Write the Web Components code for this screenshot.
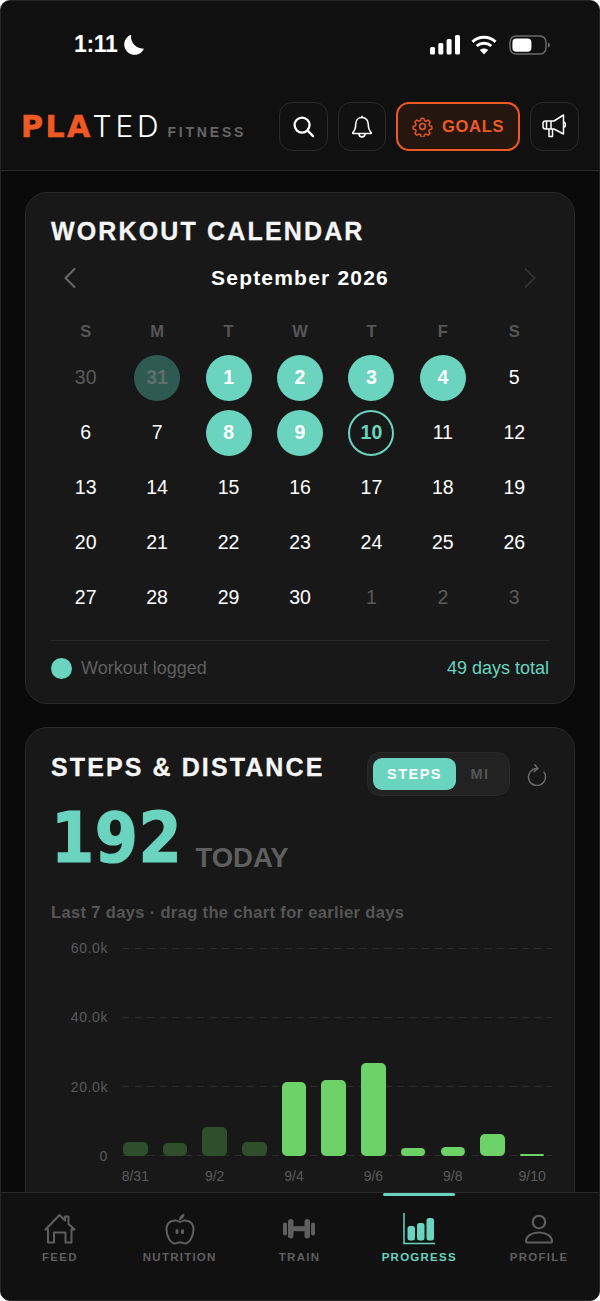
<!DOCTYPE html>
<html lang="en"><head><meta charset="utf-8"><title>Plated Fitness</title>
<style>
html,body{margin:0;padding:0;background:#fff;}
body{font-family:"Liberation Sans",Arial,sans-serif;color:#fff;}
</style></head>
<body>
<plated-app>
  <status-bar slot="top"></status-bar>
  <app-header slot="top"></app-header>
  <workout-calendar></workout-calendar>
  <steps-card></steps-card>
  <bottom-nav slot="bottom"></bottom-nav>
</plated-app>
<script>
const TEAL='#6ad4bf', ORANGE='#ef5a24', GREY='#5f5f5f';
function def(name, html){
  customElements.define(name, class extends HTMLElement{
    constructor(){super();this.attachShadow({mode:'open'}).innerHTML=typeof html==='function'?html(this):html;}
    connectedCallback(){ if(typeof html==='function') this.shadowRoot.innerHTML=html(this); }
  });
}
def('plated-app',`<style>
:host{display:flex;flex-direction:column;width:600px;height:1301px;box-sizing:border-box;background:#0a0a0a;border-radius:10px;border:1px solid #262626;overflow:hidden;font-family:"Liberation Sans",Arial,sans-serif;}
main{flex:1;min-height:0;overflow:hidden;display:flex;flex-direction:column;gap:23px;padding:21px 24px 0;}
</style><slot name="top"></slot><main><slot></slot></main><slot name="bottom"></slot>`);

def('status-bar',`<style>
:host{display:flex;align-items:center;height:87px;box-sizing:border-box;padding:0 49px 0 73px;background:#101010;}
.time{font-size:23px;font-weight:700;letter-spacing:-.35px;margin-right:6px;}
.sp{flex:1}
svg{display:block}
.row{display:flex;align-items:center}
</style>
<span class="time">1:11</span>
<svg width="22" height="22" viewBox="0 0 22 22"><path d="M8.200 .8A10.300 10.300 0 1 0 21 14.600 12 12 0 0 1 8.200 .8Z" fill="#fff"/></svg>
<span class="sp"></span>
<div class="row" style="gap:11px">
<svg width="30" height="20" viewBox="0 0 30 20"><g fill="#fff"><rect x="0" y="12" width="5" height="7.500" rx="1.500"/><rect x="8.300" y="8" width="5" height="11.500" rx="1.500"/><rect x="16.600" y="4" width="5" height="15.500" rx="1.500"/><rect x="25" y="0" width="5" height="19.500" rx="1.500"/></g></svg>
<svg width="26" height="20" viewBox="0 0 26 20" fill="none" stroke="#fff" stroke-width="3"><path d="M1.500 6.800C8 .7 18 .7 24.500 6.800"/><path d="M5.700 11C10 7.200 16 7.200 20.300 11"/><path d="M13 19.500 8.800 15c2.500-2 5.900-2 8.400 0Z" fill="#fff" stroke="none"/></svg>
<svg width="41" height="20" viewBox="0 0 41 20" style="margin-left:1px"><rect x="1" y="1" width="36" height="18" rx="6" fill="none" stroke="#6b6b6b" stroke-width="1.500"/><rect x="3.400" y="3.400" width="19" height="13.400" rx="4" fill="#fff"/><path d="M39 7.500c1.300.5 2 1.400 2 2.500s-.7 2-2 2.500Z" fill="#6b6b6b"/></svg>
</div>`);

const searchI=`<svg width="23" height="23" viewBox="0 0 24 24" fill="none" stroke="#fff" stroke-width="2.400" stroke-linecap="round"><circle cx="10.500" cy="10.500" r="7.800"/><path d="M16.300 16.300 22 22"/></svg>`;
const bellI=`<svg width="22" height="25" viewBox="0 0 24 26" fill="none" stroke="#fff" stroke-width="1.700" stroke-linejoin="round"><path d="M12 3.200c-4.400 0-6.800 3.400-6.800 7.200 0 4.600-1 7-3.200 9.200v1h20v-1c-2.200-2.200-3.200-4.600-3.200-9.200 0-3.800-2.400-7.200-6.800-7.200Z"/><path d="M12 3.200V1.200"/><path d="M8.700 20.800c0 2 1.400 3.500 3.300 3.500s3.300-1.500 3.300-3.500"/></svg>`;
const gearI=`<svg width="21" height="21" viewBox="0 0 24 24" fill="none" stroke="${ORANGE}" stroke-width="1.700" stroke-linejoin="round"><circle cx="12" cy="12" r="3.300"/><path d="M10.200 1.600h3.600l.6 3 2.200.9 2.500-1.700 2.600 2.600-1.700 2.500.9 2.200 3 .6v3.600l-3 .6-.9 2.200 1.700 2.500-2.600 2.600-2.500-1.700-2.200.9-.6 3h-3.600l-.6-3-2.200-.9-2.500 1.700-2.600-2.600 1.700-2.500-.9-2.200-3-.6v-3.600l3-.6.9-2.200-1.700-2.500 2.600-2.600 2.500 1.700 2.200-.9Z" transform="translate(1.200 1.200) scale(.9)"/></svg>`;
const megaI=`<svg width="24" height="24" viewBox="0 0 24 24" fill="none" stroke="#fff" stroke-width="1.500" stroke-linejoin="round"><path d="M21.500 1 12 7H3.500C2 7 1 8 1 9.500v3C1 14 2 15 3.500 15H12l9.500 5Z"/><path d="M21.500 8c1.300.4 2 1.400 2 2.700s-.7 2.300-2 2.700"/><path d="M9 7v8M4.500 7v8"/><path d="M7 15v7.500h3.500V15"/></svg>`;

def('icon-button',`<style>
:host{display:flex;align-items:center;justify-content:center;box-sizing:border-box;width:48.500px;height:49px;border:1.500px solid #2a2a2a;border-radius:13px;background:#111;}
</style><slot></slot>`);

def('app-header',`<style>
:host{display:flex;align-items:center;height:83px;box-sizing:border-box;padding:0 20.500px 6px 20px;background:#101010;border-bottom:1.500px solid #2c2c2c;}
.logo{display:flex;align-items:baseline;flex:1;white-space:nowrap}
.pla{font-family:"DejaVu Sans","Liberation Sans",sans-serif;font-size:30px;font-weight:700;color:${ORANGE};letter-spacing:2.400px;-webkit-text-stroke:.6px ${ORANGE};}
.ted{font-family:Inter,"Liberation Sans",sans-serif;font-size:30px;font-weight:300;color:#fff;letter-spacing:3.800px}
.fit{font-size:14px;font-weight:700;color:#666;letter-spacing:2.800px;margin-left:5px}
.btns{display:flex;gap:9.700px;align-items:center}
.goals{display:flex;align-items:center;justify-content:center;gap:9px;box-sizing:border-box;width:124.500px;height:49px;border:2px solid ${ORANGE};border-radius:13px;background:#251710;color:${ORANGE};font-size:16.500px;font-weight:700;letter-spacing:.7px}
svg{display:block}
</style>
<div class="logo"><span class="pla">PLA</span><span class="ted">TED</span><span class="fit">FITNESS</span></div>
<div class="btns">
<icon-button>${searchI}</icon-button>
<icon-button>${bellI}</icon-button>
<div class="goals">${gearI}<span>GOALS</span></div>
<icon-button>${megaI}</icon-button>
</div>`);

def('day-cell',h=>{
  const k=h.getAttribute('kind')||'';
  return `<style>
:host{display:flex;align-items:center;justify-content:center;height:55px;}
.c{display:flex;align-items:center;justify-content:center;box-sizing:border-box;width:46px;height:46px;border-radius:50%;font-size:19.500px;color:#fff;}
.muted{color:#5a5a5a}
.logged{background:${TEAL};font-weight:700}
.past{background:#2f5a52;color:#5f6f6b;font-weight:700}
.today{border:2px solid ${TEAL};color:${TEAL};font-weight:700}
</style><div class="c ${k}"><slot></slot></div>`;
});

def('workout-calendar',`<style>
:host{display:block;flex:none;box-sizing:border-box;height:511.500px;padding:23px 25px 0;background:#181818;border:1.500px solid #2a2a2a;border-radius:22px;}
h2{margin:0;font-size:25px;line-height:30px;font-weight:700;letter-spacing:2.150px;color:#f5f5f5;-webkit-text-stroke:.3px #f5f5f5}
.month{display:flex;align-items:center;justify-content:space-between;height:36px;margin-top:14px;padding:0 12px}
.month b{font-size:21px;letter-spacing:1.200px;color:#fff}
.wk,.days{display:grid;grid-template-columns:repeat(7,1fr);text-align:center;margin-left:-1px;margin-right:-1px}
.wk{margin-top:25px;font-size:16.500px;line-height:20px;font-weight:700;color:#565656}
.days{margin-top:9px}
.foot{display:flex;align-items:center;margin-top:15px;padding-top:14px;border-top:1.500px solid #2a2a2a;height:27px;font-size:18px;color:#5f5f5f}
.dot{width:21px;height:21px;border-radius:50%;background:${TEAL};margin-right:9px}
.sp{flex:1}
.tot{color:${TEAL}}
svg{display:block}
</style>
<h2>WORKOUT CALENDAR</h2>
<div class="month">
<svg width="14" height="22" viewBox="0 0 14 22" fill="none" stroke="#6a6a6a" stroke-width="2" stroke-linecap="round" stroke-linejoin="round"><path d="M11.500 2 2.500 11l9 9"/></svg>
<b>September 2026</b>
<svg width="14" height="22" viewBox="0 0 14 22" fill="none" stroke="#303030" stroke-width="2" stroke-linecap="round" stroke-linejoin="round"><path d="M2.500 2l9 9-9 9"/></svg>
</div>
<div class="wk"><span>S</span><span>M</span><span>T</span><span>W</span><span>T</span><span>F</span><span>S</span></div>
<div class="days">${(()=>{
  const kinds={1:'logged',2:'logged',3:'logged',4:'logged',8:'logged',9:'logged',10:'today'};
  let o=`<day-cell kind="muted">30</day-cell><day-cell kind="past">31</day-cell>`;
  for(let d=1;d<=30;d++)o+=`<day-cell kind="${kinds[d]||''}">${d}</day-cell>`;
  for(let d=1;d<=3;d++)o+=`<day-cell kind="muted">${d}</day-cell>`;
  return o;
})()}</div>
<div class="foot"><span class="dot"></span><span>Workout logged</span><span class="sp"></span><span class="tot">49 days total</span></div>`);

def('steps-card',`<style>
:host{display:block;flex:none;box-sizing:border-box;height:520px;padding:24px 25px 0;background:#181818;border:1.500px solid #2a2a2a;border-radius:22px 22px 0 0;}
.top{display:flex;align-items:flex-start}
h2{margin:0;font-size:25px;line-height:30px;font-weight:700;letter-spacing:2.100px;color:#f5f5f5;white-space:nowrap;flex:1;-webkit-text-stroke:.3px #f5f5f5}
.tog{display:flex;align-items:center;box-sizing:border-box;width:143px;height:44px;padding:0 5px;border:1.500px solid #2a2a2a;border-radius:13px;background:#222;font-size:14.500px;font-weight:700;letter-spacing:1.500px}
.on{display:flex;align-items:center;justify-content:center;width:83px;height:32px;border-radius:9px;background:${TEAL};color:#fff}
.off{flex:1;text-align:center;color:#555}
.ref{margin:12px 2px 0 17px;display:block}
.big{display:flex;align-items:flex-start;margin-top:0;height:96px}
.num{font-family:"DejaVu Sans Condensed","DejaVu Sans",sans-serif;font-stretch:condensed;font-size:69px;font-weight:700;line-height:84px;letter-spacing:.6px;color:${TEAL};-webkit-text-stroke:1.200px ${TEAL}}
.today{font-size:27.500px;font-weight:700;color:#5f5f5f;line-height:32px;margin:46px 0 0 13px;letter-spacing:0}
.sub{font-size:16.500px;line-height:20px;font-weight:700;color:#565656;letter-spacing:.35px;margin-top:10.500px}
.chart{display:grid;grid-template-columns:57px 430px;column-gap:14px;margin:26px 0 0}
.y{display:flex;flex-direction:column;justify-content:space-between;height:208px;text-align:right;font-size:14px;letter-spacing:.6px;color:#5a5a5a}
.y span{height:0;line-height:0;display:block}
.plot{display:grid;height:208px}
.plot>*{grid-area:1/1}
.lines{display:flex;flex-direction:column;justify-content:space-between}
.lines i{display:block;height:1px;background:repeating-linear-gradient(90deg,#2c2c2c 0 7px,transparent 7px 12.500px)}
.bars,.xl{display:flex;gap:15.100px;padding-left:1px}
.bars{align-items:flex-end}
.bars i{display:block;width:24.600px;border-radius:5px;background:#6dd268;flex:none}
.bars i.d{background:#2f4f2c}
.xl{grid-column:2;margin-top:10px;height:20px;font-size:14px;line-height:20px;color:#5a5a5a}
.xl span{display:flex;justify-content:center;width:24.600px;flex:none;white-space:nowrap}
</style>
<div class="top"><h2>STEPS &amp; DISTANCE</h2>
<div class="tog"><span class="on">STEPS</span><span class="off">MI</span></div>
<svg class="ref" width="20" height="22" viewBox="0 0 20 22" fill="none" stroke="#6a6a6a" stroke-width="1.500" stroke-linecap="round" stroke-linejoin="round"><path d="M10 4.500a8.500 8.500 0 1 0 7 3.700"/><path d="M7.800 .8 11 4.500 7.300 7.500"/></svg>
</div>
<div class="big"><span class="num">192</span><span class="today">TODAY</span></div>
<div class="sub">Last 7 days · drag the chart for earlier days</div>
<div class="chart">
<div class="y"><span>60.0k</span><span>40.0k</span><span>20.0k</span><span>0</span></div>
<div class="plot">
<div class="lines"><i></i><i></i><i></i><i></i></div>
<div class="bars">${[[14.500,1],[13,1],[29,1],[14.500,1],[74.500,0],[76.500,0],[93.500,0],[8.500,0],[9.500,0],[22.500,0],[2.500,0]].map(([h,d])=>`<i class="${d?'d':''}" style="height:${h}px${h<3?';border-radius:2px':''}"></i>`).join('')}</div>
</div>
<div class="xl">${['8/31','','9/2','','9/4','','9/6','','9/8','','9/10'].map(t=>`<span>${t}</span>`).join('')}</div>
</div>`);

def('nav-item',h=>{
  const a=h.hasAttribute('active');
  return `<style>
:host{display:flex;flex-direction:column;align-items:center;flex:1;position:relative;height:100%;color:${a?TEAL:GREY};}
.bar{position:absolute;top:0;left:24px;right:24px;height:3px;border-radius:2px;background:${TEAL};display:${a?'block':'none'}}
.ic{height:32px;margin-top:20px;display:flex;justify-content:center}
.l{margin-top:5px;font-size:11.500px;line-height:14px;font-weight:700;letter-spacing:1.250px}
</style><span class="bar"></span><div class="ic"><slot></slot></div><div class="l">${h.getAttribute('label')}</div>`;
});

def('bottom-nav',`<style>
:host{display:flex;flex:none;height:108px;box-sizing:border-box;margin-left:-1px;background:#111;border-top:1.500px solid #2a2a2a;}
svg{display:block}
</style>
<nav-item label="FEED"><svg width="32" height="32" viewBox="0 0 32 32" fill="none" stroke="${GREY}" stroke-width="2" stroke-linejoin="round"><path d="M1.500 16.500 15.500 2 21 7.500V3.500h3.500V11l6 5.500h-3V29.500h-6v-10H10v10H4V16.500Z"/></svg></nav-item>
<nav-item label="NUTRITION"><svg width="32" height="32" viewBox="0 0 32 32"><g fill="none" stroke="${GREY}" stroke-width="2"><path d="M16 9C12 6.500 3 6.500 2.500 16 2.500 24 7 30.500 11 30.500c2 0 3-1.300 5-1.300s3 1.300 5 1.300c4 0 8.500-6.500 8.500-14.500C29 6.500 20 6.500 16 9Z"/></g><path d="M15 7.500C15 4 17 1.500 20.500.8 20.500 4 18.500 6.500 15 7.500Z" fill="${GREY}"/><rect x="11.500" y="16" width="3" height="5" rx="1.500" fill="${GREY}"/><rect x="17" y="16" width="3" height="5" rx="1.500" fill="${GREY}"/></svg></nav-item>
<nav-item label="TRAIN"><svg width="34" height="32" viewBox="0 0 34 32" fill="${GREY}"><rect x="1" y="9.500" width="4" height="13" rx="2"/><rect x="6" y="6" width="5.500" height="19.500" rx="2.700"/><rect x="10" y="13.200" width="14" height="5"/><rect x="22.500" y="6" width="5.500" height="19.500" rx="2.700"/><rect x="29" y="9.500" width="4" height="13" rx="2"/></svg></nav-item>
<nav-item active label="PROGRESS"><svg width="32" height="32" viewBox="0 0 32 32"><path d="M1 0V30.500H32" fill="none" stroke="${TEAL}" stroke-width="1.500"/><rect x="4.500" y="13" width="7.500" height="14.500" rx="2.500" fill="${TEAL}"/><rect x="14" y="10" width="7.500" height="17.500" rx="2.500" fill="${TEAL}"/><rect x="23.500" y="5" width="7.500" height="22.500" rx="2.500" fill="${TEAL}"/></svg></nav-item>
<nav-item label="PROFILE"><svg width="32" height="32" viewBox="0 0 32 32" fill="none" stroke="${GREY}" stroke-width="2.100" stroke-linejoin="round"><circle cx="16" cy="9" r="6.200"/><path d="M3 28.500C3 23 9 19.500 16 19.500s13 3.500 13 9c0 .7-.5 1-1 1H4c-.5 0-1-.3-1-1Z"/></svg></nav-item>`);
</script>
</body></html>
